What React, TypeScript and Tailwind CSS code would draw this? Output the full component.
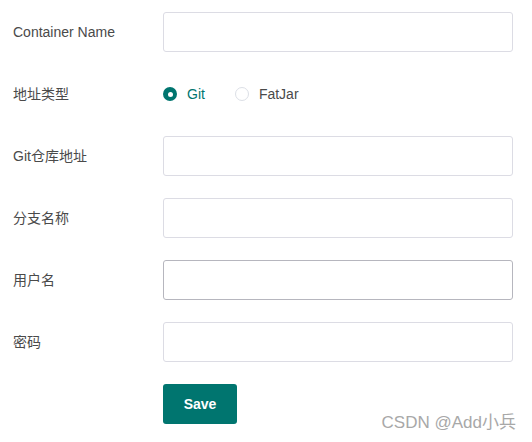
import { useState } from 'react';

const fields = [
    { id: 'name', label: 'Container Name' },
    { id: 'type', label: '地址类型', radio: true },
    { id: 'git', label: 'Git仓库地址' },
    { id: 'branch', label: '分支名称' },
    { id: 'user', label: '用户名', hovered: true },
    { id: 'pwd', label: '密码' },
];

const App: React.FC = () => {
    const [addrType, setAddrType] = useState('git');

    return (
        <div
            className="w-[532px] h-[442px] bg-white relative overflow-hidden"
            style={{ fontFamily: '"Liberation Sans", "Noto Sans CJK SC", sans-serif' }}
        >
            <div className="flex flex-col gap-[22px] pt-3 pl-[13px]">
                {fields.map((f) => (
                    <div key={f.id} className="flex items-center h-10">
                        <label className="w-[150px] text-[14px] text-[#4a4a4a]">{f.label}</label>
                        {f.radio ? (
                            <div className="flex items-center text-[14px]">
                                {[
                                    { id: 'git', label: 'Git' },
                                    { id: 'fatjar', label: 'FatJar' },
                                ].map((opt) => (
                                    <button
                                        key={opt.id}
                                        onClick={() => setAddrType(opt.id)}
                                        className="flex items-center mr-[30px]"
                                    >
                                        {addrType === opt.id ? (
                                            <span className="w-[14px] h-[14px] rounded-full bg-[#00756f] flex items-center justify-center">
                                                <span className="w-[5px] h-[5px] rounded-full bg-white" />
                                            </span>
                                        ) : (
                                            <span className="w-[14px] h-[14px] rounded-full border border-[#dcdfe6] bg-white" />
                                        )}
                                        <span
                                            className={`ml-[10px] ${
                                                addrType === opt.id ? 'text-[#00756f]' : 'text-[#4a4a4a]'
                                            }`}
                                        >
                                            {opt.label}
                                        </span>
                                    </button>
                                ))}
                            </div>
                        ) : (
                            <input
                                className={`w-[350px] h-10 rounded-[3px] border bg-white px-3 text-[14px] outline-none ${
                                    f.hovered ? 'border-[#b6b6be]' : 'border-[#dcdce4]'
                                }`}
                            />
                        )}
                    </div>
                ))}
                <div className="flex">
                    <div className="w-[150px]" />
                    <button className="w-[74px] h-10 rounded-[3px] bg-[#00756f] text-white text-[14px] font-bold">
                        Save
                    </button>
                </div>
            </div>
            {/* watermark */}
            <div className="absolute right-[16px] bottom-[7px] text-[17px] text-[#a8a8a8]">CSDN @Add小兵</div>
        </div>
    );
};

export default App;
